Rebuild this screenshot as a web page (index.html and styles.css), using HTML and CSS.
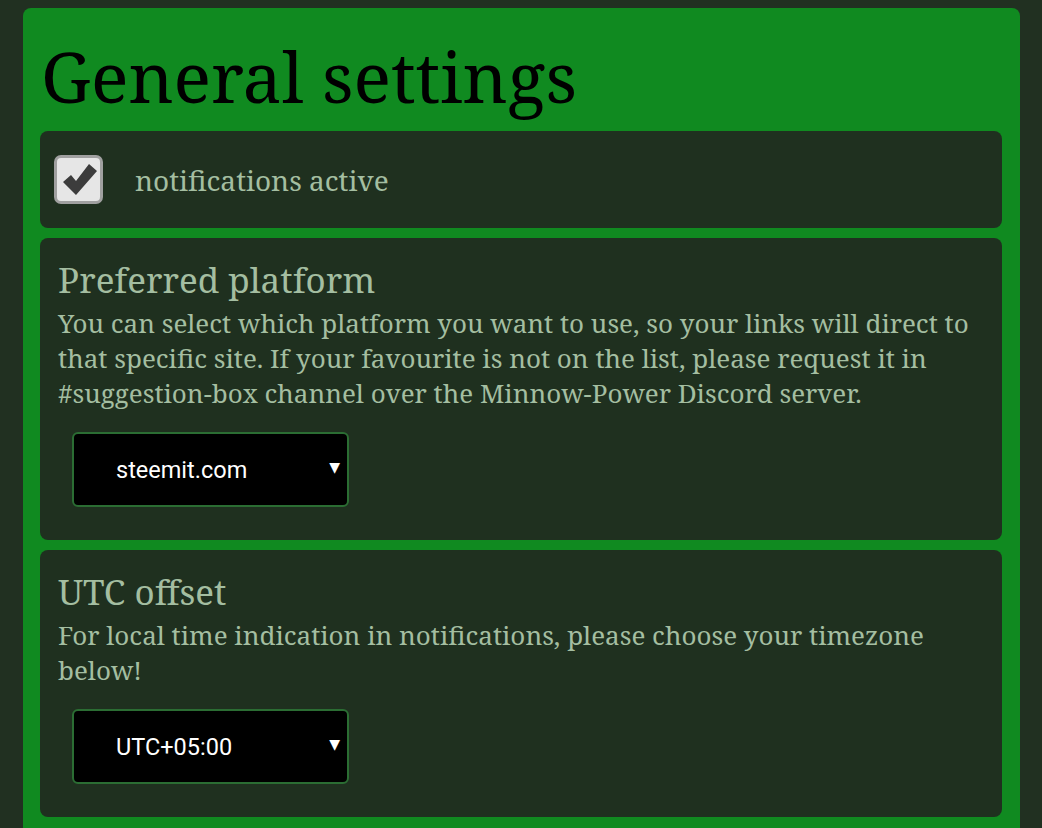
FILE: index.html
```html
<!DOCTYPE html>
<html lang="en">
<head>
  <meta charset="UTF-8">
  <meta name="viewport" content="width=device-width, initial-scale=1.0">
  <title>General settings</title>
  <link rel="stylesheet" href="styles.css">
</head>
<body>
<div class="panel">
  <h1>General settings</h1>

  <div class="card check-row">
    <span class="checkbox">
      <svg viewBox="0 0 40 40" width="40" height="40">
        <path d="M4 22 L12 15 L17 21 L30 4 L38 11 L17 35 Z" fill="#3c3c3c"/>
      </svg>
    </span>
    <span class="check-label">notifications active</span>
  </div>

  <div class="card">
    <h2>Preferred platform</h2>
    <p>You can select which platform you want to use, so your links will direct to that specific site. If your favourite is not on the list, please request it in #suggestion-box channel over the Minnow-Power Discord server.</p>
    <div class="select-wrap">
      <select>
        <option>steemit.com</option>
        <option>busy.org</option>
        <option>steempeak.com</option>
      </select>
    </div>
  </div>

  <div class="card">
    <h2>UTC offset</h2>
    <p>For local time indication in notifications, please choose your timezone below!</p>
    <div class="select-wrap">
      <select>
        <option>UTC+05:00</option>
      </select>
    </div>
  </div>
</div>
</body>
</html>
```

FILE: styles.css
```css
body {
  margin: 0;
  padding: 8px 22px 0 23px;
  background-color: #213021;
  font-family: "Noto Serif", "DejaVu Serif", serif;
}
.panel {
  background: #108a20;
  border-radius: 8px;
  padding: 14px 18px 40px 17px;
}
h1 {
  font-weight: normal;
  font-size: 70px;
  line-height: 1;
  margin: 19px 0 20px 1px;
  color: #000;
}
.card {
  background: #1f301f;
  border-radius: 8px;
  padding: 22px 18px 33px 18px;
  margin-bottom: 10px;
  color: #a4bea1;
}
.check-row {
  display: flex;
  align-items: center;
  gap: 32px;
  padding: 24px 14px 24px 14px;
}
.checkbox {
  width: 49px;
  height: 49px;
  box-sizing: border-box;
  border: 3px solid #a0a0a0;
  border-radius: 7px;
  background: #e6e6e6;
  display: flex;
  align-items: center;
  justify-content: center;
}
.check-label {
  font-size: 28px;
}
h2 {
  font-weight: normal;
  font-size: 35px;
  line-height: 40px;
  margin: 0 0 6px 0;
}
p {
  font-size: 26px;
  line-height: 35px;
  margin: 0 0 21px 0;
}
.select-wrap {
  position: relative;
  width: 277px;
  margin-left: 14px;
}
.select-wrap::after {
  content: "▼";
  position: absolute;
  right: 9px;
  top: 27px;
  font-size: 14px;
  color: #fff;
  font-family: "DejaVu Sans", sans-serif;
  pointer-events: none;
}
select {
  appearance: none;
  -webkit-appearance: none;
  width: 277px;
  height: 75px;
  background: #000;
  color: #fff;
  border: 2px solid #2b6d33;
  border-radius: 6px;
  padding: 0 0 0 42px;
  font-family: Roboto, sans-serif;
  font-size: 23.5px;
}
```
